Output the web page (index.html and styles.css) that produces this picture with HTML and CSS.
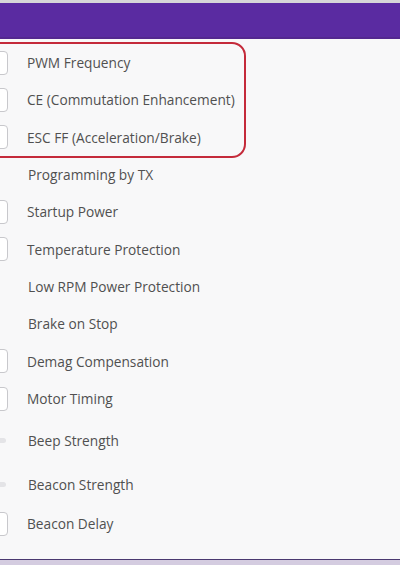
FILE: index.html
```html
<!DOCTYPE html>
<html lang="en">
<head>
    <meta charset="UTF-8">
    <meta name="viewport" content="width=device-width, initial-scale=1.0">
    <title>ESC Settings</title>
    <link rel="stylesheet" href="styles.css">
</head>
<body>
    <div class="topbar"></div>
    <div class="header"></div>

    <div class="panel">
        <div class="highlight">
            <div class="row"><div class="ctrl"></div><span class="label">PWM Frequency</span></div>
            <div class="row"><div class="ctrl"></div><span class="label">CE (Commutation Enhancement)</span></div>
            <div class="row"><div class="ctrl"></div><span class="label">ESC FF (Acceleration/Brake)</span></div>
        </div>
        <div class="row"><div class="spacer"></div><span class="label plain">Programming by TX</span></div>
        <div class="row"><div class="ctrl"></div><span class="label">Startup Power</span></div>
        <div class="row"><div class="ctrl"></div><span class="label">Temperature Protection</span></div>
        <div class="row"><div class="spacer"></div><span class="label plain">Low RPM Power Protection</span></div>
        <div class="row"><div class="spacer"></div><span class="label plain">Brake on Stop</span></div>
        <div class="row"><div class="ctrl"></div><span class="label">Demag Compensation</span></div>
        <div class="row"><div class="ctrl"></div><span class="label">Motor Timing</span></div>
        <div class="row slider-row"><div class="slider"></div><span class="label">Beep Strength</span></div>
        <div class="row slider-row"><div class="slider"></div><span class="label">Beacon Strength</span></div>
        <div class="row"><div class="ctrl"></div><span class="label">Beacon Delay</span></div>
    </div>

    <div class="footer"></div>
</body>
</html>
```

FILE: styles.css
```css
body {
    margin: 0;
    font-family: 'Open Sans', 'Noto Sans', sans-serif;
    font-size: 13.7px;
    color: #505050;
    background: #d4cce0;
    overflow: hidden;
}
.topbar {
    height: 3px;
    background: #d6d6d8;
}
.header {
    height: 34px;
    background: #5a2ba1;
    border-bottom: 2px solid #53288f;
}
.panel {
    height: 521px;
    box-sizing: border-box;
    background: #f8f8f9;
    border-bottom: 1.5px solid #4a3870;
    padding-top: 3px;
}
/* red annotation box round the first three settings */
.highlight {
    margin-left: -20px;
    width: 266px;
    box-sizing: border-box;
    padding-left: 18px;
    border: 2.5px solid #c42a3a;
    border-radius: 14px;
    margin-bottom: -2px;
}
.row {
    display: flex;
    align-items: center;
    height: 37.33px;
}
.ctrl {
    width: 40px;
    height: 24px;
    margin-left: -32px;
    box-sizing: border-box;
    border: 1px solid #c8c8cc;
    border-radius: 4px;
    background: #fff;
    flex-shrink: 0;
}
.spacer {
    width: 8px;
    flex-shrink: 0;
}
.slider-row {
    height: 44px;
    padding-top: 3px;
    box-sizing: border-box;
}
.slider {
    width: 20px;
    height: 5px;
    margin-left: -14px;
    border-radius: 3px;
    background: #e4e4e7;
    flex-shrink: 0;
}
.label {
    margin-left: 19px;
    white-space: nowrap;
}
.label.plain {
    margin-left: 20px;
}
.slider + .label {
    margin-left: 22px;
}
```
